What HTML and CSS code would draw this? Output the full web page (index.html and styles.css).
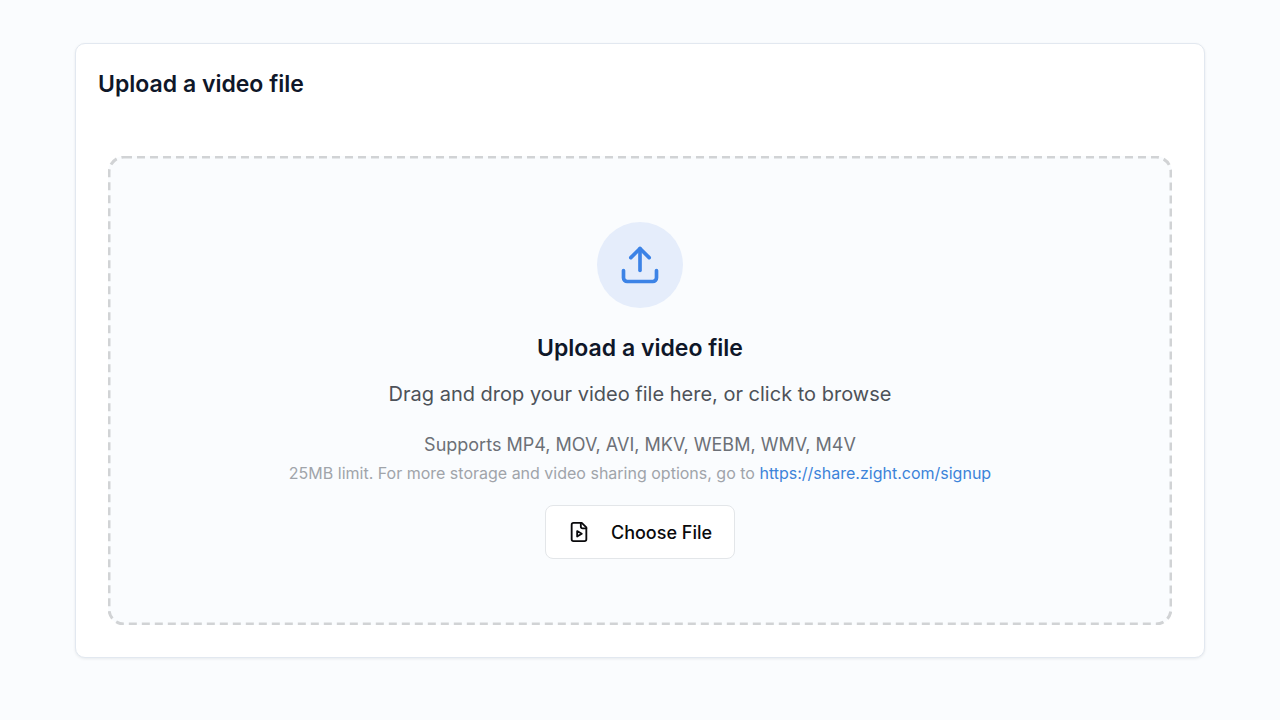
FILE: index.html
```html
<!DOCTYPE html>
<html lang="en">
<head>
  <meta charset="UTF-8" />
  <meta name="viewport" content="width=device-width, initial-scale=1.0" />
  <title>Upload a video file</title>
  <link rel="stylesheet" href="styles.css">
</head>
<body>
  <main class="card">
    <h1 class="card-title">Upload a video file</h1>

    <section class="dropzone" id="dropzone">
      <svg class="outline" aria-hidden="true"><rect rx="15" /></svg>
      <div class="upload-icon">
        <svg viewBox="0 0 24 24" width="44" height="44" fill="none" stroke="currentColor" stroke-width="2" stroke-linecap="round" stroke-linejoin="round" aria-hidden="true">
          <path d="M21 15v4a2 2 0 0 1-2 2H5a2 2 0 0 1-2-2v-4" />
          <polyline points="17 8 12 3 7 8" />
          <line x1="12" y1="3" x2="12" y2="15" />
        </svg>
      </div>
      <h2 class="heading">Upload a video file</h2>
      <p class="hint">Drag and drop your video file here, or click to browse</p>
      <p class="formats">Supports MP4, MOV, AVI, MKV, WEBM, WMV, M4V</p>
      <p class="limit">25MB limit. For more storage and video sharing options, go to <a href="https://share.zight.com/signup">https://share.zight.com/signup</a></p>
      <button type="button" class="choose">
        <svg viewBox="0 0 24 24" width="22" height="22" fill="none" stroke="currentColor" stroke-width="2" stroke-linecap="round" stroke-linejoin="round" aria-hidden="true">
          <path d="M15 2H6a2 2 0 0 0-2 2v16a2 2 0 0 0 2 2h12a2 2 0 0 0 2-2V7Z" />
          <path d="M14 2v4a2 2 0 0 0 2 2h4" />
          <path d="m10 11 5 3-5 3v-6Z" />
        </svg>
        Choose File
      </button>
    </section>
  </main>
</body>
</html>
```

FILE: styles.css
```css
* {
  box-sizing: border-box;
}
body {
  margin: 0;
  padding: 43px 75px;
  background-color: #fafcfe;
  color: #0f1729;
  font-family: Inter, "Liberation Sans", sans-serif;
}
.card {
  padding: 21px 32px 32px;
  background-color: #ffffff;
  border: 1px solid #e2e8f0;
  border-radius: 10px;
  box-shadow: 0 1px 3px rgba(15, 23, 42, 0.08);
}
.card-title,
.heading {
  margin: 0;
  font-size: 23px;
  line-height: 38px;
  font-weight: 600;
}
.card-title {
  margin-left: -10px;
  margin-bottom: 53px;
}
.dropzone {
  position: relative;
  display: flex;
  flex-direction: column;
  align-items: center;
  padding: 66px 20px;
  background-color: #fafcfe;
  border-radius: 16px;
  text-align: center;
}
/* dashed frame, drawn over the edge of the drop area */
.outline {
  position: absolute;
  inset: 0;
  width: 100%;
  height: 100%;
  pointer-events: none;
}
.outline rect {
  x: 1px;
  y: 1px;
  width: calc(100% - 2px);
  height: calc(100% - 2px);
  fill: none;
  stroke: #d1d3d5;
  stroke-width: 3px;
  stroke-dasharray: 8 5;
}
.upload-icon {
  display: flex;
  align-items: center;
  justify-content: center;
  width: 86px;
  height: 86px;
  margin-bottom: 21px;
  border-radius: 50%;
  background-color: #e5edfb;
  color: #3c83e6;
}
.hint,
.formats,
.limit {
  margin: 0;
}
.hint {
  margin-top: 11px;
  font-size: 20px;
  line-height: 32px;
  color: #4d5259;
}
.formats {
  margin-top: 21px;
  font-size: 18px;
  line-height: 28px;
  color: #6c7077;
}
.limit {
  margin-top: 2px;
  font-size: 16px;
  line-height: 24px;
  color: #a0a4aa;
}
.limit a {
  color: #3c83d9;
  text-decoration: none;
}
.choose {
  display: flex;
  align-items: center;
  gap: 21px;
  height: 54px;
  margin-top: 20px;
  padding: 0 22px;
  background-color: #ffffff;
  border: 1px solid #e3e6e9;
  border-radius: 8px;
  color: #0a0a0c;
  font-family: inherit;
  font-size: 18px;
  font-weight: 500;
  cursor: pointer;
}
.choose:hover {
  background-color: #f1f5f9;
}
```
